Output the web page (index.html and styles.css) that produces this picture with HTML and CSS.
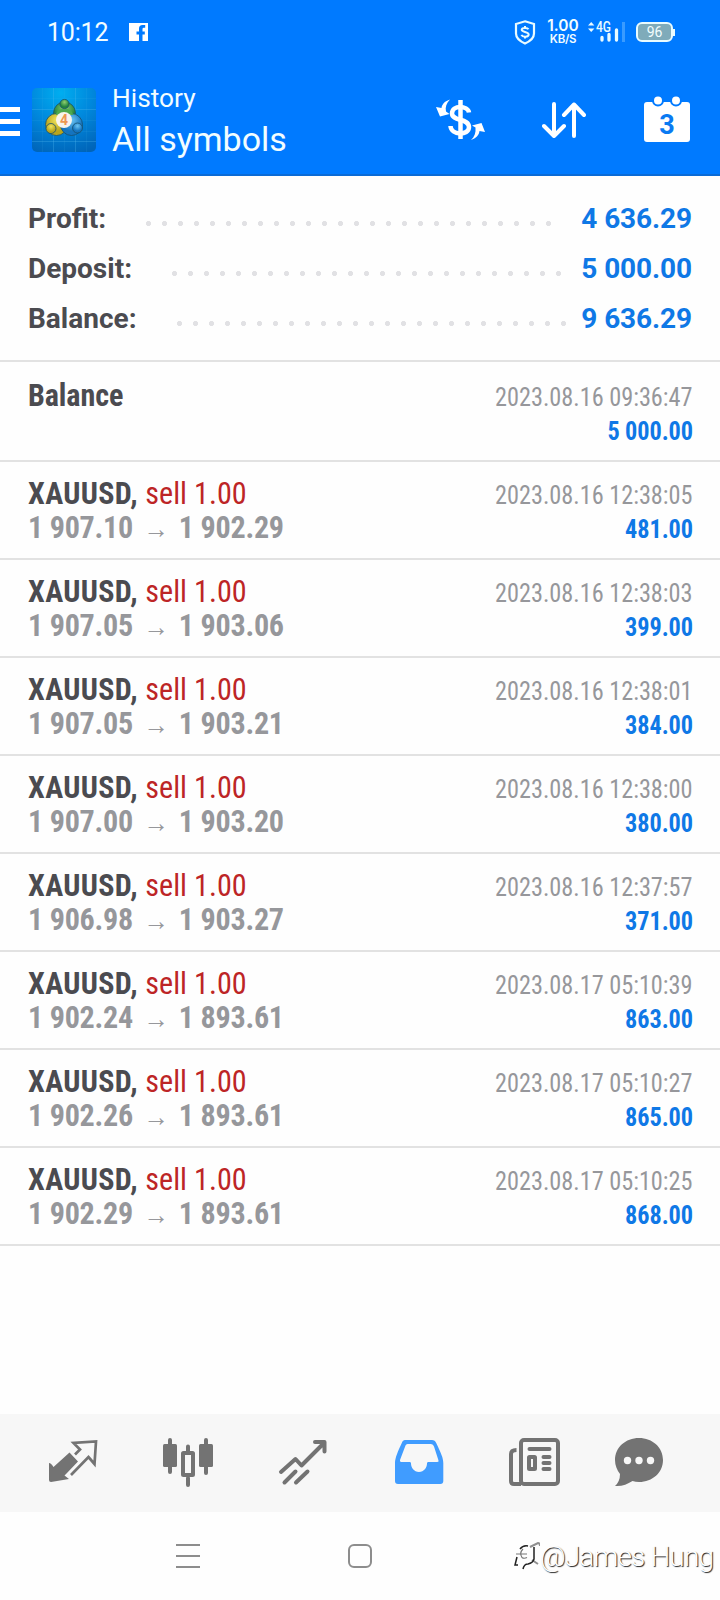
FILE: index.html
```html
<!DOCTYPE html>
<html lang="en">
<head>
<meta charset="utf-8">
<title>History</title>
<link rel="stylesheet" href="styles.css">
</head>
<body>
<header class="top">
  <div class="status">
    <span class="clock">10:12</span>
    <svg class="fb" width="19" height="18" viewBox="0 0 19 18"><path fill="#fff" d="M0 0h19v18h-5.500v-6.500h2.300v-3h-2.300v-2.500q0-1.300 1.300-1.300h1.400v-2.700h-2.700q-3.500 0-3.500 3.500v3h-2.500v3h2.500V18H0z"/></svg>
    <span class="grow"></span>
    <svg class="shield" width="22" height="25" viewBox="0 0 22 25" fill="none" stroke="#e9fbff" stroke-width="2.200"><path d="M11 1.300 20 4v9.500c0 5-4.500 8-9 10-4.500-2-9-5-9-10V4z"/><path stroke-width="2" d="M14.500 9.200c-1-1.700-6.800-1.900-6.800.6 0 2.700 7 1.600 7 4.700 0 2.900-6.200 2.800-7.300.4M11 6v2M11 16.500v2"/></svg>
    <span class="rate"><b>1.00</b><b class="unit">KB/S</b></span>
    <svg class="signal" width="38" height="22" viewBox="0 0 38 22"><path fill="#e9fbff" d="M0 4.500 3.200 1l3.200 3.500zM0 7.500 3.200 11l3.200-3.500z"/><text class="net" x="8" y="11" textLength="15" lengthAdjust="spacingAndGlyphs">4G</text><path stroke="#e9fbff" stroke-width="3.300" stroke-linecap="round" d="M14 16.500v2.500M21 13.500V19M28.500 9v10"/><path stroke="#3a9bff" stroke-width="3" d="M35.500 1v20"/></svg>
    <span class="battery">96</span>
  </div>
  <div class="bar">
    <svg class="menu" width="20" height="30" viewBox="0 0 20 30"><path stroke="#fff" stroke-width="5" d="M0 3.500h20M0 15.500h20M0 27.500h20"/></svg>
    <svg class="logo" width="64" height="64" viewBox="0 0 64 64">
      <defs>
        <radialGradient id="bg" cx=".45" cy=".08" r="1"><stop offset="0" stop-color="#00aef0"/><stop offset=".5" stop-color="#0087dc"/><stop offset="1" stop-color="#0064b8"/></radialGradient>
        <radialGradient id="g" cy=".3"><stop offset="0" stop-color="#8fce70"/><stop offset="1" stop-color="#23843c"/></radialGradient>
        <radialGradient id="y" cy=".3"><stop offset="0" stop-color="#f0e45c"/><stop offset="1" stop-color="#b9a51d"/></radialGradient>
        <radialGradient id="b" cy=".3"><stop offset="0" stop-color="#6cc5f4"/><stop offset="1" stop-color="#1474c0"/></radialGradient>
      </defs>
      <rect width="64" height="64" rx="5" fill="url(#bg)"/>
      <path stroke="#52baf0" stroke-opacity=".3" d="M21.500 0v64M43.500 0v64M0 21.500h64M0 53.500h64"/>
      <path stroke="#52baf0" stroke-opacity=".1" d="M10.500 0v64M32.500 0v64M54.500 0v64M0 10.500h64M0 32.500h64M0 43.500h64"/>
      <g stroke="#17506f" stroke-width=".8">
        <circle cx="32.500" cy="25" r="11" fill="url(#g)"/>
        <circle cx="24.500" cy="36.500" r="11" fill="url(#y)"/>
        <circle cx="39.500" cy="36.500" r="11" fill="url(#b)"/>
        <path fill="#4fa94f" stroke="none" d="M23.500 27a9.500 9.500 0 0 1 18 0z"/>
        <circle cx="32.500" cy="16" r="4.600" fill="url(#g)"/>
        <circle cx="19" cy="40.500" r="5" fill="url(#y)"/>
        <circle cx="45.500" cy="40" r="5" fill="url(#b)"/>
      </g>
      <circle cx="32" cy="32" r="8" fill="#f8f4ee"/>
      <text class="four" x="32" y="37" text-anchor="middle">4</text>
    </svg>
    <div class="titles"><div class="small">History</div><div class="big">All symbols</div></div>
    <svg class="act-money" width="50" height="42" viewBox="0 0 50 42" fill="none" stroke="#fff" stroke-width="4.500"><path d="M24.500 1v39"/><path d="M33 13.500c-1-7-17-8-17 1 0 8 17 4.500 17 13.500 0 9-18 8.500-18.500-1"/><path fill="#fff" stroke="none" d="M14 .5C9 2 6 5 5.500 9L0 8l4 9.500 9.500-2.500-3.500-2.500C9 8 10.500 4 14 .5zM35 41c5-1.500 8-5 8.500-9l5.500 1-3.500-9-9.500 2.500 3.500 2c.5 5-1 9.500-4.500 12.500z"/></svg>
    <svg class="act-sort" width="44" height="36" viewBox="0 0 44 36" fill="none" stroke="#fff" stroke-width="4" stroke-linecap="round" stroke-linejoin="round"><path d="M12 2v31.500M2 24l10 10 10-10M32 34V2.500M22 13 32 2.500 42 13"/></svg>
    <svg class="act-cal" width="46" height="46" viewBox="0 0 46 46"><rect y="6" width="46" height="40" rx="3" fill="#fff"/><g fill="#fff" stroke="#007aff" stroke-width="2"><circle cx="14" cy="4.500" r="5"/><circle cx="32" cy="4.500" r="5"/></g><text class="day" x="23" y="38" text-anchor="middle">3</text></svg>
  </div>
</header>
<section class="summary">
  <div class="sum"><span>Profit:</span><i class="dots" style="width:416px"></i><b>4 636.29</b></div>
  <div class="sum"><span>Deposit:</span><i class="dots" style="width:400px"></i><b>5 000.00</b></div>
  <div class="sum"><span>Balance:</span><i class="dots" style="width:400px"></i><b>9 636.29</b></div>
</section>
<main class="list">
  <div class="row first"><div class="left"><div class="sym tight">Balance</div></div><div class="right"><div class="date">2023.08.16 09:36:47</div><div class="val">5 000.00</div></div></div>
  <div class="row"><div class="left"><div class="sym">XAUUSD, <span class="sell">sell 1.00</span></div><div class="price">1 907.10<span class="arr">→</span>1 902.29</div></div><div class="right"><div class="date">2023.08.16 12:38:05</div><div class="val">481.00</div></div></div>
  <div class="row"><div class="left"><div class="sym">XAUUSD, <span class="sell">sell 1.00</span></div><div class="price">1 907.05<span class="arr">→</span>1 903.06</div></div><div class="right"><div class="date">2023.08.16 12:38:03</div><div class="val">399.00</div></div></div>
  <div class="row"><div class="left"><div class="sym">XAUUSD, <span class="sell">sell 1.00</span></div><div class="price">1 907.05<span class="arr">→</span>1 903.21</div></div><div class="right"><div class="date">2023.08.16 12:38:01</div><div class="val">384.00</div></div></div>
  <div class="row"><div class="left"><div class="sym">XAUUSD, <span class="sell">sell 1.00</span></div><div class="price">1 907.00<span class="arr">→</span>1 903.20</div></div><div class="right"><div class="date">2023.08.16 12:38:00</div><div class="val">380.00</div></div></div>
  <div class="row"><div class="left"><div class="sym">XAUUSD, <span class="sell">sell 1.00</span></div><div class="price">1 906.98<span class="arr">→</span>1 903.27</div></div><div class="right"><div class="date">2023.08.16 12:37:57</div><div class="val">371.00</div></div></div>
  <div class="row"><div class="left"><div class="sym">XAUUSD, <span class="sell">sell 1.00</span></div><div class="price">1 902.24<span class="arr">→</span>1 893.61</div></div><div class="right"><div class="date">2023.08.17 05:10:39</div><div class="val">863.00</div></div></div>
  <div class="row"><div class="left"><div class="sym">XAUUSD, <span class="sell">sell 1.00</span></div><div class="price">1 902.26<span class="arr">→</span>1 893.61</div></div><div class="right"><div class="date">2023.08.17 05:10:27</div><div class="val">865.00</div></div></div>
  <div class="row"><div class="left"><div class="sym">XAUUSD, <span class="sell">sell 1.00</span></div><div class="price">1 902.29<span class="arr">→</span>1 893.61</div></div><div class="right"><div class="date">2023.08.17 05:10:25</div><div class="val">868.00</div></div></div>
</main>
<nav class="tabs">
  <svg width="50" height="50" viewBox="0 0 50 50"><path fill="#737373" d="m21.500 14.500 8.500 9-11.500 12-2 2 4.500 3.500L3 44q-2 0-2-2V25q2 0 4.500 4z"/><path fill="none" stroke="#737373" stroke-width="2.700" d="m27 16.500 5-5-6.500-6.500L48 3.500 46.500 26l-6-7L23 37"/></svg>
  <svg width="52" height="50" viewBox="0 0 52 50"><g fill="#737373"><rect x="1" y="6" width="14" height="23" rx="1.500"/><rect x="37" y="6" width="14" height="23" rx="1.500"/></g><g fill="none" stroke="#737373" stroke-width="4" stroke-linecap="round"><path d="M8 2v32M44 2v33M26 8.500V14M26 40v7"/><rect x="21" y="15" width="10" height="22" rx=".5"/></g></svg>
  <svg width="50" height="50" viewBox="0 0 50 50" fill="none" stroke="#737373" stroke-width="4" stroke-linecap="round" stroke-linejoin="round"><path d="M3 34 17.500 21l6 6.500L46 5M37 4h9.500v9.500M6.500 44.500l11-11M18 44.500l11.500-11"/></svg>
  <svg class="inbox" width="50" height="50" viewBox="0 0 50 50"><path fill="#409cff" fill-rule="evenodd" d="M12 2h26q3 0 4.200 3C47 15 49.300 20 49.300 25v18q0 3-3 3H4q-3 0-3-3V25C1 20 4 13 7.800 5 9 2 10 2 12 2zm1.500 4q-1.500 0-2 1.500L6 22q-.5 1.500 1 2h9q1 0 1 1.500c0 4 3 8.500 8 8.500s8-4.500 8-8.500q0-1.500 1-1.500h9q2 0 1.500-1.500L40 8.500Q39.300 6 37 6z"/></svg>
  <svg width="52" height="50" viewBox="0 0 52 50" fill="none" stroke="#737373" stroke-width="4"><rect x="13" y="2" width="37" height="44" rx="3"/><path d="M13 46H6q-3 0-3-3V16q0-4 5.500-4"/><g stroke-linecap="round"><path d="M21.500 11h20M35.500 19h6M35.500 25h6M35.500 31h6"/><rect x="21" y="19" width="6" height="12" rx=".5"/></g></svg>
  <svg width="50" height="50" viewBox="0 0 50 50"><path fill="#737373" d="M25 0c13.500 0 24 9.500 24 22S38.500 44 25 44q-3.500 0-6.500-1C13 46.500 8 48.500 1 48q5-4.500 5-12C3 32 1 27.500 1 22 1 9.500 11.500 0 25 0z"/><g fill="#f7f7f7"><circle cx="13.500" cy="22.500" r="3.700"/><circle cx="25" cy="22.500" r="3.700"/><circle cx="36.500" cy="22.500" r="3.700"/></g></svg>
</nav>
<footer class="sys">
  <svg width="24" height="26" viewBox="0 0 24 26"><path stroke="#8d8d8d" stroke-width="2" d="M0 2h24M0 13h24M0 24h24"/></svg>
  <span class="home"></span>
  <div class="mark"><svg width="28" height="30" viewBox="0 0 28 30" fill="none"><path stroke="#8f8f8f" stroke-width="2" d="m18 6 8-4q2 0 2 3M20 19l6 4"/><path stroke="#777" stroke-width="1.200" d="M4 13h11M11 8q-4 4-1 8.500 2 1.500 5 0"/><path stroke="#222" stroke-width="1.500" d="M8 8q3-4 8-3M5 16l-2 8h3M22 6v12q-1 4-6 5-4 0-5 5"/></svg><span>@James Hung</span></div>
</footer>
</body>
</html>
```
FILE: styles.css
```css
* { box-sizing: border-box; }
body { margin: 0; width: 720px; height: 1600px; background: #fefefe; font-family: Roboto, "Noto Sans", sans-serif; display: flex; flex-direction: column; overflow: hidden; }
svg { display: block; flex: none; }
.top { height: 176px; background: #007aff; border-bottom: 2px solid #0b6bd6; color: #f2fdff; flex: none; }
.status { height: 64px; display: flex; align-items: center; padding-left: 47px; padding-right: 47px; }
.clock { font-size: 25px; width: 82px; letter-spacing: -.2px; }
.grow { flex: 1; }
.rate { width: 34px; margin-left: 10px; font-family: Inter, Roboto, sans-serif; font-size: 15.5px; line-height: 14px; display: flex; flex-direction: column; align-items: center; }
.rate b { font-weight: 600; }
.rate .unit { font-size: 11.5px; line-height: 12px; letter-spacing: -.3px; }
.signal { margin-left: 8px; }
.net { font: 500 14px Roboto, sans-serif; fill: #e9fbff; }
.battery { margin-left: 10px; width: 37px; height: 20px; border: 2px solid #e9fbff; border-radius: 6px; background: #7fabba; font-size: 14px; line-height: 16px; text-align: center; position: relative; }
.battery::after { content: ""; position: absolute; right: -4px; top: 5px; width: 2px; height: 7px; background: #e9fbff; }
.bar { height: 110px; display: flex; align-items: flex-start; }
.menu { margin-top: 42px; }
.logo { margin: 24px 0 0 12px; }
.four { font: 700 14px Roboto, sans-serif; fill: #ee9852; }
.titles { margin: 18px 0 0 16px; width: 324px; }
.small { font-size: 26.3px; line-height: 32px; }
.big { font-size: 34px; line-height: 50px; }
.act-money { margin-top: 35px; }
.act-sort { margin: 38px 0 0 56px; }
.act-cal { margin: 32px 0 0 57.500px; overflow: visible; }
.day { font: 700 27px Roboto, sans-serif; fill: #0a7af2; }
.summary { height: 186px; padding: 18px 28px 0; border-bottom: 2px solid #e2e2e2; flex: none; }
.sum { display: flex; height: 50px; line-height: 50px; font-size: 28px; font-weight: 700; color: #4b4b50; }
.sum b { margin-left: auto; color: #0f78e6; font-weight: 700; letter-spacing: -.1px; }
.dots { margin-left: 40px; height: 50px; background: radial-gradient(circle at 2.5px 29.5px, #e1e1e4 2.2px, transparent 2.900px) 0 0 / 16px 50px repeat-x; }
.row { display: flex; justify-content: space-between; height: 98px; padding: 14px 28px 0; border-bottom: 2px solid #e2e2e2; line-height: 34px; white-space: nowrap; }
.first { height: 100px; padding-top: 16px; }
.left { font-family: "Roboto Condensed", Roboto, sans-serif; font-stretch: 75%; font-size: 32px; font-weight: 700; color: #4b4b50; transform: scaleX(.94); transform-origin: left; }
.sym { height: 34px; letter-spacing: .35px; }
.tight { letter-spacing: -.1px; }
.sell { font-weight: 400; color: #bd2526; letter-spacing: .05px; }
.price { height: 34px; color: #96979b; letter-spacing: -.25px; }
.arr { font-size: 27px; line-height: 1; margin: 0 11px; }
.right { font-family: "Roboto Condensed", Roboto, sans-serif; font-stretch: 75%; padding-top: 2px; text-align: right; font-size: 26px; transform: scaleX(.934); transform-origin: right; margin-right: -.5px; }
.date { color: #96979b; }
.val { color: #0f78e6; font-weight: 700; letter-spacing: -.1px; margin-right: -.5px; }
.tabs { margin-top: auto; height: 98px; flex: none; background: #f7f7f7; display: flex; padding: 24px 56px 0 48px; gap: 64px; }
.tabs .inbox { margin-left: 1.5px; }
.tabs svg:last-child { margin-left: -9.5px; }
.sys { height: 88px; flex: none; display: flex; align-items: center; padding-left: 176px; }
.home { flex: none; width: 24px; height: 24px; border: 2px solid #8d8d8d; border-radius: 6px; margin-left: 148px; }
.mark { flex: none; margin-left: 140px; display: flex; align-items: center; color: #fff; font-size: 28px; font-weight: 300; letter-spacing: -.85px; text-shadow: 1px 1px 1px #222; white-space: nowrap; }
```
